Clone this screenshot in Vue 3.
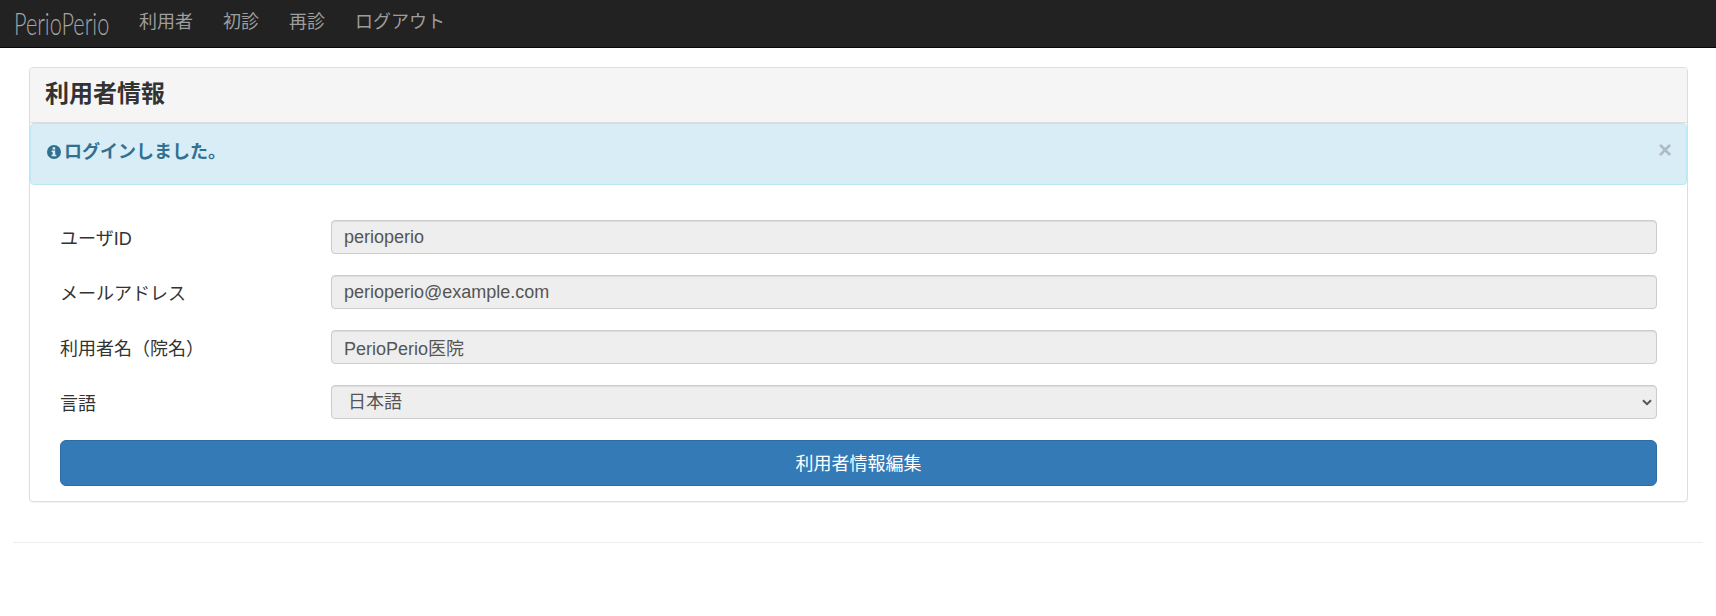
<script setup>
const fields = [
  { label: 'ユーザID', value: 'perioperio' },
  { label: 'メールアドレス', value: 'perioperio@example.com' },
  { label: '利用者名（院名）', value: 'PerioPerio医院' },
]
const navItems = ['利用者', '初診', '再診', 'ログアウト']
</script>

<template>
  <div class="page">
    <nav class="navbar">
      <a class="brand">PerioPerio</a>
      <a v-for="item in navItems" :key="item" class="nav-link">{{ item }}</a>
    </nav>
    <main class="container">
      <section class="panel">
        <header class="panel-heading"><h3>利用者情報</h3></header>
        <div class="alert">
          <span class="alert-text">
            <svg class="info" viewBox="0 0 14 14" aria-hidden="true">
              <circle cx="7" cy="7" r="7" fill="#31708f" />
              <rect x="5.6" y="2.3" width="2.6" height="2.2" fill="#d9edf7" />
              <path d="M4.6 5.4h3.6v4.3h1.1v1.5H4.6V9.7h1V6.9h-1z" fill="#d9edf7" />
            </svg>
            ログインしました。
          </span>
          <span class="close">×</span>
        </div>
        <form class="panel-body" @submit.prevent>
          <div v-for="f in fields" :key="f.label" class="form-row">
            <label class="form-label">{{ f.label }}</label>
            <input class="control" :value="f.value" readonly />
          </div>
          <div class="form-row">
            <label class="form-label">言語</label>
            <div class="select-wrap">
              <select class="control select">
                <option>日本語</option>
              </select>
              <svg class="chevron" viewBox="0 0 10 7" aria-hidden="true">
                <path d="M1 1.2l4 4 4-4" fill="none" stroke="#555" stroke-width="2" />
              </svg>
            </div>
          </div>
          <button class="btn" type="button">利用者情報編集</button>
        </form>
      </section>
      <hr class="rule" />
    </main>
  </div>
</template>

<style scoped>
.page {
  font-family: "Liberation Sans", "Noto Sans CJK JP", sans-serif;
  font-size: 18px;
  color: #333;
}
.navbar {
  display: flex;
  align-items: center;
  height: 47px;
  padding-left: 14px;
  background: #222;
  border-bottom: 1px solid #080808;
}
.brand {
  width: 110px;
  font-family: Lato, sans-serif;
  font-weight: 300;
  font-size: 31px;
  line-height: 47px;
  color: #a5a5a5;
  transform: scaleX(0.7);
  transform-origin: left center;
  white-space: nowrap;
}
.nav-link {
  padding: 0 15px;
  color: #9d9d9d;
  line-height: 42px;
  margin-bottom: 3px;
}
.container {
  padding: 19px 13px 0;
}
.panel {
  margin: 0 15px 0 16px;
  background: #fff;
  border: 1px solid #ddd;
  border-radius: 4px;
  box-shadow: 0 1px 1px rgba(0, 0, 0, 0.05);
}
.panel-heading {
  display: flex;
  align-items: center;
  height: 55px;
  box-sizing: border-box;
  padding: 0 15px 2px;
  background: #f5f5f5;
  border-bottom: 1px solid #ddd;
  border-radius: 3px 3px 0 0;
}
.panel-heading h3 {
  margin: 0;
  font-size: 24px;
  font-weight: 700;
  line-height: 1;
}
.alert {
  display: flex;
  align-items: center;
  justify-content: space-between;
  height: 62px;
  box-sizing: border-box;
  padding: 0 14px 8px 16px;
  background: #d9edf7;
  border: 1px solid #bce8f1;
  border-radius: 4px;
  color: #31708f;
  font-weight: 700;
}
.alert-text {
  display: flex;
  align-items: center;
  gap: 3px;
}
.info {
  width: 14px;
  height: 14px;
  margin-top: 3px;
}
.close {
  font-size: 24px;
  line-height: 1;
  color: #000;
  opacity: 0.2;
}
.panel-body {
  display: flex;
  flex-direction: column;
  gap: 21px;
  padding: 35px 30px 15px;
}
.form-row {
  display: grid;
  grid-template-columns: 271px 1fr;
  align-items: center;
}
.form-label {
  line-height: 30px;
  padding-top: 4px;
}
.control {
  display: block;
  width: 100%;
  height: 34px;
  box-sizing: border-box;
  padding: 0 12px;
  font: inherit;
  color: #555;
  background: #eee;
  border: 1px solid #ccc;
  border-radius: 4px;
  box-shadow: inset 0 1px 1px rgba(0, 0, 0, 0.075);
  outline: none;
}
.select-wrap {
  position: relative;
}
.select {
  appearance: none;
  padding-left: 16px;
}
.chevron {
  position: absolute;
  right: 5px;
  top: 14px;
  width: 10px;
  height: 7px;
}
.btn {
  height: 46px;
  padding-bottom: 3px;
  font: inherit;
  color: #fff;
  background: #337ab7;
  border: 1px solid #2e6da4;
  border-radius: 6px;
}
.rule {
  margin: 40px 0 0;
  border: 0;
  border-top: 1px solid #eee;
}
</style>
